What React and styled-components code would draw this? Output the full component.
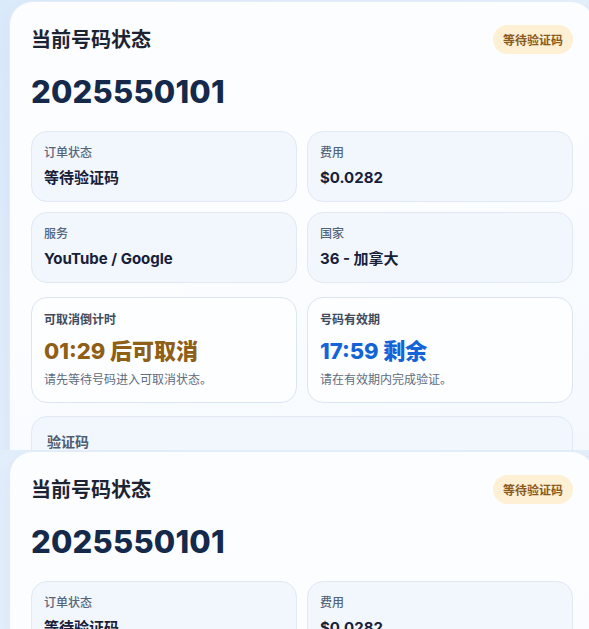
import React from 'react';
import styled, { createGlobalStyle } from 'styled-components';

const GlobalStyle = createGlobalStyle`
  html, body {
    margin: 0;
    padding: 0;
    overflow: hidden;
  }
  body {
    background: linear-gradient(135deg, #dcebfb 0%, #e8f1fc 50%, #dfecfb 100%);
    font-family: Inter, "Noto Sans CJK SC", sans-serif;
    -webkit-font-smoothing: antialiased;
  }
`;

const Frame = styled.div`
  height: 450px;
  overflow: hidden;
  padding: 1px 0 0 9px;
  box-sizing: border-box;
`;

const Card = styled.section`
  width: 586px;
  box-sizing: border-box;
  padding: 23px 21px 24px 21px;
  border-radius: 24px;
  border: 1px solid #e3ecf7;
  background: linear-gradient(160deg, #fcfdff 0%, #fbfdff 45%, #f3f8fe 100%);
  box-shadow: 0 8px 24px rgba(120, 160, 210, 0.12);
`;

const Header = styled.div`
  display: flex;
  align-items: center;
  justify-content: space-between;
  height: 29px;
`;

const Title = styled.h2`
  margin: 0;
  font-size: 20px;
  line-height: 28px;
  font-weight: 700;
  color: #1c2434;
`;

const Badge = styled.span`
  display: inline-flex;
  align-items: center;
  height: 29px;
  padding: 0 10px;
  border-radius: 15px;
  background: #fdf0d4;
  color: #8a5a1c;
  font-size: 12px;
  font-weight: 700;
`;

const Number = styled.div`
  margin-top: 18px;
  font-size: 31px;
  line-height: 40px;
  font-weight: 800;
  color: #15294b;
  letter-spacing: 0.2px;
`;

const Grid = styled.div`
  display: grid;
  grid-template-columns: 1fr 1fr;
  gap: 10px;
  margin-top: ${(p) => p.$top}px;
`;

const Box = styled.div`
  padding: ${(p) => (p.$tall ? '14px 12px 14px' : '13px 12px 13px')};
  border-radius: 16px;
  border: 1px solid ${(p) => (p.$tall ? '#dbe6f2' : '#e0e9f4')};
  background: ${(p) => (p.$tall ? '#fdfeff' : '#f2f7fd')};
`;

const Label = styled.div`
  font-size: 12px;
  line-height: 16px;
  font-weight: ${(p) => (p.$tall ? 600 : 500)};
  color: ${(p) => (p.$tall ? '#3f4b5c' : '#55657b')};
`;

const Value = styled.div`
  margin-top: 7px;
  font-size: 15px;
  line-height: 20px;
  font-weight: 700;
  color: #16203a;
`;

const Countdown = styled.div`
  margin-top: 9px;
  font-size: 22px;
  line-height: 28px;
  font-weight: 800;
  color: ${(p) => p.$color};
`;

const Hint = styled.div`
  margin-top: 7px;
  font-size: 12px;
  line-height: 16px;
  color: #5f6c7e;
`;

const CodeBox = styled.div`
  margin-top: 13px;
  padding: 16px 15px 18px;
  border-radius: 16px;
  border: 1px solid #e0e9f4;
  background: #f2f7fd;
`;

const CodeLabel = styled.div`
  font-size: 14px;
  line-height: 18px;
  font-weight: 700;
  color: #4e5d72;
`;

const CodeValue = styled.div`
  margin-top: 10px;
  font-size: 28px;
  line-height: 36px;
  font-weight: 800;
  color: #94a3b8;
`;

const info = [
  { label: '订单状态', value: '等待验证码' },
  { label: '费用', value: '$0.0282' },
  { label: '服务', value: 'YouTube / Google' },
  { label: '国家', value: '36 - 加拿大' },
];

const timers = [
  { label: '可取消倒计时', value: '01:29 后可取消', color: '#8f5e17', hint: '请先等待号码进入可取消状态。' },
  { label: '号码有效期', value: '17:59 剩余', color: '#1464d8', hint: '请在有效期内完成验证。' },
];

const StatusCard = () => (
  <Card>
    <Header>
      <Title>当前号码状态</Title>
      <Badge>等待验证码</Badge>
    </Header>
    <Number>2025550101</Number>
    <Grid $top={19}>
      {info.map((item) => (
        <Box key={item.label}>
          <Label>{item.label}</Label>
          <Value>{item.value}</Value>
        </Box>
      ))}
    </Grid>
    <Grid $top={14}>
      {timers.map((t) => (
        <Box key={t.label} $tall>
          <Label $tall>{t.label}</Label>
          <Countdown $color={t.color}>{t.value}</Countdown>
          <Hint>{t.hint}</Hint>
        </Box>
      ))}
    </Grid>
    <CodeBox>
      <CodeLabel>验证码</CodeLabel>
      <CodeValue>------</CodeValue>
    </CodeBox>
  </Card>
);

export default function App() {
  return (
    <>
      <GlobalStyle />
      <Frame>
        <StatusCard />
      </Frame>
      <Frame>
        <StatusCard />
      </Frame>
    </>
  );
}
